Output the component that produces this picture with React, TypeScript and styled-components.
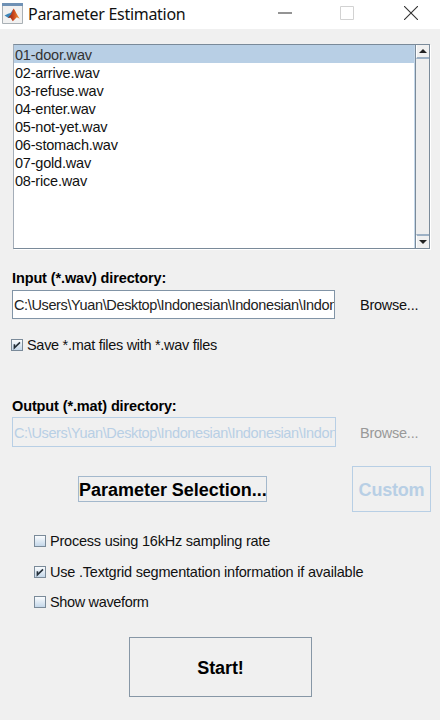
import React from "react";
import styled, { createGlobalStyle } from "styled-components";

const Global = createGlobalStyle`
  * { box-sizing: border-box; }
  body { margin: 0; background: #f0f0f0; }
`;

const Dialog = styled.main`
  width: 440px;
  height: 720px;
  overflow: hidden;
  display: flex;
  flex-direction: column;
  background: #f0f0f0;
  color: #111;
  font: 14.5px/18px "Liberation Sans", Arial, sans-serif;
`;

const TitleBar = styled.header`
  height: 29px;
  flex: none;
  display: flex;
  align-items: center;
  background: #fff;
  padding: 0 22px 3px 2px;
`;

const Title = styled.h1`
  margin: 1px auto 0 5px;
  font: 400 16px/22px "Noto Sans", "Open Sans", sans-serif;
  letter-spacing: -0.3px;
  color: #111;
  white-space: nowrap;
`;

const WindowControls = styled.div`
  display: grid;
  grid-template-columns: 62px 64px 14px;
`;

const Content = styled.div`
  display: flex;
  flex-direction: column;
  padding: 15px 9px 0 11px;
`;

const Text = styled.span<{ $spacing: number }>`
  letter-spacing: ${(p) => p.$spacing}px;
  white-space: pre;
`;

const ListBox = styled.div`
  display: flex;
  width: 417px;
  height: 205px;
  margin-left: 2px;
  background: #fff;
  border: 1px solid #7a8a99;
  border-left-color: #a4adb8;
  box-shadow: 1px 1px 0 #fff;
`;

const Files = styled.ul`
  flex: 1;
  list-style: none;
  margin: 0;
  padding: 0;
`;

const File = styled.li<{ $selected: boolean }>`
  height: 18px;
  line-height: 20px;
  padding-left: 1px;
  color: ${(p) => (p.$selected ? "#333" : "#111")};
  background: ${(p) => (p.$selected ? "#b8cfe5" : "transparent")};
`;

const ScrollBar = styled.div`
  width: 14px;
  display: flex;
  flex-direction: column;
  justify-content: space-between;
  background: #eee;
  border-left: 1px solid #7a8a99;
  box-shadow: -1px 0 0 #c5d8ea;
`;

const Arrow = styled.button<{ $down?: boolean }>`
  width: 13px;
  height: 14px;
  padding: 0;
  border: 0;
  border-left: 1px solid #fff;
  border-${(p) => (p.$down ? "top" : "bottom")}: 2px solid #9db1c5;
  background: #f0f0f0;
  display: grid;
  place-items: center;
`;

const Label = styled.label<{ $top: number }>`
  height: 18px;
  margin: ${(p) => p.$top}px 0 2px 1px;
  font-weight: 700;
  color: #000;
  letter-spacing: -0.12px;
  white-space: nowrap;
`;

const PathRow = styled.div`
  display: flex;
  align-items: center;
  justify-content: space-between;
  height: 30px;
`;

const PathField = styled.div<{ $disabled?: boolean }>`
  width: ${(p) => (p.$disabled ? 324 : 323)}px;
  height: ${(p) => (p.$disabled ? 30 : 29)}px;
  margin-left: 1px;
  overflow: hidden;
  line-height: ${(p) => (p.$disabled ? 30 : 29)}px;
  padding-left: 1px;
  border: 1px solid ${(p) => (p.$disabled ? "#b8cfe5" : "#8194a6")};
  background: ${(p) => (p.$disabled ? "#f0f0f0" : "#fff")};
  color: ${(p) => (p.$disabled ? "#b8cfe5" : "#222")};
`;

const Browse = styled.button<{ $disabled?: boolean }>`
  width: 72px;
  padding: 2px 0 0 1px;
  text-align: left;
  border: 0;
  background: none;
  font: inherit;
  color: ${(p) => (p.$disabled ? "#999" : "#111")};
`;

const CheckRow = styled.div`
  display: flex;
  align-items: center;
  height: 18px;
  gap: 4px;
`;

const SaveOption = styled.div`
  margin-top: 17px;
`;

const Box = styled.span`
  width: 12px;
  height: 12px;
  display: grid;
  place-items: center;
  border: 1px solid #7a8a99;
  background: linear-gradient(#fafcfe, #c4d7e9);
`;

const ActionRow = styled.div`
  display: flex;
  align-items: center;
  justify-content: space-between;
  height: 46px;
  margin-top: 19px;
  padding-left: 67px;
`;

type Tone = "focus" | "disabled" | "normal";
const borders: Record<Tone, string> = { focus: "#a3b8cc", disabled: "#b8cfe5", normal: "#8797a6" };

const ActionButton = styled.button<{ $w: number; $h: number; $tone: Tone }>`
  width: ${(p) => p.$w}px;
  height: ${(p) => p.$h}px;
  flex: none;
  padding: 1px 0 0;
  border: 1px solid ${(p) => borders[p.$tone]};
  background: #f0f0f0;
  color: ${(p) => (p.$tone === "disabled" ? "#b8cfe5" : "#000")};
  font: 700 18px/20px "Liberation Sans", Arial, sans-serif;
  white-space: nowrap;
`;

const Options = styled.div`
  display: flex;
  flex-direction: column;
  gap: 12.5px;
  margin: 20px 0 26px 23px;
`;

const StartRow = styled.div`
  padding-left: 118px;
`;

const files = [
  "01-door.wav",
  "02-arrive.wav",
  "03-refuse.wav",
  "04-enter.wav",
  "05-not-yet.wav",
  "06-stomach.wav",
  "07-gold.wav",
  "08-rice.wav",
];

const path = "C:\\Users\\Yuan\\Desktop\\Indonesian\\Indonesian\\Indon";

function MatlabLogo() {
  return (
    <svg width="21" height="21" viewBox="0 0 21 21">
      <defs>
        <linearGradient id="peak" x1="0" x2="1">
          <stop offset="0" stopColor="#7b2412" />
          <stop offset=".45" stopColor="#c9431c" />
          <stop offset="1" stopColor="#ef9b37" />
        </linearGradient>
      </defs>
      <path d="M.5 .5h20v20H.5z" fill="#f1f1f1" stroke="#a9b0b5" />
      <path d="M0 0h21v3H0z" fill="#6f91b5" />
      <path d="M2.5 12.5 6 10.8l2.5-.8 3-4L9 14l-2.5 1z" fill="#3d86b9" />
      <path d="M6 14.8 9 11.5 11.5 5.5c1.8 1.7 3.4 6.6 6.3 10.2l-3-1.5-4 4L8.5 14.8z" fill="url(#peak)" />
    </svg>
  );
}

function Check({ text, spacing, checked = false }: { text: string; spacing: number; checked?: boolean }) {
  return (
    <CheckRow role="checkbox" aria-checked={checked}>
      <Box>
        {checked && (
          <svg width="10" height="10" viewBox="0 0 10 10">
            <path d="M2.4 4.2v3.6L8 2.4" fill="none" stroke="#25303a" strokeWidth="1.6" />
          </svg>
        )}
      </Box>
      <Text $spacing={spacing}>{text}</Text>
    </CheckRow>
  );
}

export default function App() {
  return (
    <Dialog>
      <Global />
      <TitleBar>
        <MatlabLogo />
        <Title>Parameter Estimation</Title>
        <WindowControls>
          <svg width="14" height="14" viewBox="0 0 14 14"><path d="M0 7h14" stroke="#666" strokeWidth="1.4" /></svg>
          <svg width="14" height="14" viewBox="0 0 14 14"><path d="M.5 .5h13v13H.5z" fill="none" stroke="#d2d2d2" /></svg>
          <svg width="14" height="14" viewBox="0 0 14 14"><path d="m0 0 14 14M14 0 0 14" stroke="#333" strokeWidth="1.1" /></svg>
        </WindowControls>
      </TitleBar>
      <Content>
        <ListBox>
          <Files>
            {files.map((name, i) => (
              <File key={name} $selected={i === 0}>
                <Text $spacing={-0.2}>{name}</Text>
              </File>
            ))}
          </Files>
          <ScrollBar>
            <Arrow aria-label="Scroll up"><svg width="8" height="4" viewBox="0 0 8 4"><path d="M4 0 8 4H0z" fill="#222" /></svg></Arrow>
            <Arrow $down aria-label="Scroll down"><svg width="8" height="4" viewBox="0 0 8 4"><path d="M0 0h8L4 4z" fill="#222" /></svg></Arrow>
          </ScrollBar>
        </ListBox>

        <Label $top={20}>Input (*.wav) directory:</Label>
        <PathRow>
          <PathField><Text $spacing={-0.37}>{path}</Text></PathField>
          <Browse><Text $spacing={-0.25}>Browse...</Text></Browse>
        </PathRow>
        <SaveOption>
          <Check text="Save *.mat files with *.wav files" spacing={-0.3} checked />
        </SaveOption>

        <Label $top={43}>Output (*.mat) directory:</Label>
        <PathRow>
          <PathField $disabled><Text $spacing={-0.37}>{path}</Text></PathField>
          <Browse $disabled><Text $spacing={-0.25}>Browse...</Text></Browse>
        </PathRow>

        <ActionRow>
          <ActionButton $w={189} $h={26} $tone="focus"><Text $spacing={-0.02}>Parameter Selection...</Text></ActionButton>
          <ActionButton $w={79} $h={46} $tone="disabled"><Text $spacing={-0.2}>Custom</Text></ActionButton>
        </ActionRow>

        <Options>
          <Check text="Process using 16kHz sampling rate" spacing={-0.22} />
          <Check text="Use .Textgrid segmentation information if available" spacing={-0.21} checked />
          <Check text="Show waveform" spacing={-0.35} />
        </Options>
        <StartRow>
          <ActionButton $w={183} $h={60} $tone="normal"><Text $spacing={-0.1}>Start!</Text></ActionButton>
        </StartRow>
      </Content>
    </Dialog>
  );
}
